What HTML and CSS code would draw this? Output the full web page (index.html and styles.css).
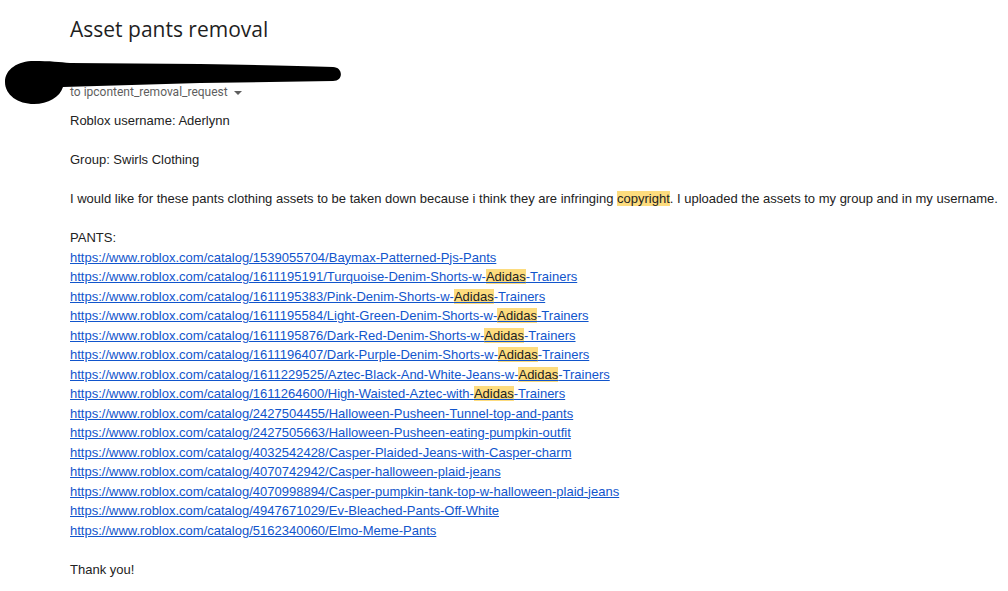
FILE: index.html
```html
<!DOCTYPE html>
<html>
<head>
<meta charset="utf-8">
<link rel="stylesheet" href="styles.css">
</head>
<body>
<div class="page">
  <svg class="scribble" width="360" height="120" viewBox="0 0 360 120">
    <path d="M34 61 C 50 61 60 62 70 63 L 200 64 C 260 65 300 66 333 67 C 343 67 344 81 333 81 L 200 83 L 63 87 C 60 97 48 104 34 104 C 18 104 5 95 5 82 C 5 69 18 61 34 61 Z" fill="#000"/>
  </svg>
  <h1 class="subject">Asset pants removal</h1>
  <div class="header">
    <div class="to">to ipcontent_removal_request <span class="caret"></span></div>
  </div>
  <div class="body">
    <p>Roblox username: Aderlynn</p>
    <p>Group: Swirls Clothing</p>
    <p>I would like for these pants clothing assets to be taken down because i think they are infringing <mark>copyright</mark>. I uploaded the assets to my group and in my username.</p>
    <p>PANTS:<br>
<a href="#">https://www.roblox.com/catalog/1539055704/Baymax-Patterned-Pjs-Pants</a><br>
<a href="#">https://www.roblox.com/catalog/1611195191/Turquoise-Denim-Shorts-w-<mark>Adidas</mark>-Trainers</a><br>
<a href="#">https://www.roblox.com/catalog/1611195383/Pink-Denim-Shorts-w-<mark>Adidas</mark>-Trainers</a><br>
<a href="#">https://www.roblox.com/catalog/1611195584/Light-Green-Denim-Shorts-w-<mark>Adidas</mark>-Trainers</a><br>
<a href="#">https://www.roblox.com/catalog/1611195876/Dark-Red-Denim-Shorts-w-<mark>Adidas</mark>-Trainers</a><br>
<a href="#">https://www.roblox.com/catalog/1611196407/Dark-Purple-Denim-Shorts-w-<mark>Adidas</mark>-Trainers</a><br>
<a href="#">https://www.roblox.com/catalog/1611229525/Aztec-Black-And-White-Jeans-w-<mark>Adidas</mark>-Trainers</a><br>
<a href="#">https://www.roblox.com/catalog/1611264600/High-Waisted-Aztec-with-<mark>Adidas</mark>-Trainers</a><br>
<a href="#">https://www.roblox.com/catalog/2427504455/Halloween-Pusheen-Tunnel-top-and-pants</a><br>
<a href="#">https://www.roblox.com/catalog/2427505663/Halloween-Pusheen-eating-pumpkin-outfit</a><br>
<a href="#">https://www.roblox.com/catalog/4032542428/Casper-Plaided-Jeans-with-Casper-charm</a><br>
<a href="#">https://www.roblox.com/catalog/4070742942/Casper-halloween-plaid-jeans</a><br>
<a href="#">https://www.roblox.com/catalog/4070998894/Casper-pumpkin-tank-top-w-halloween-plaid-jeans</a><br>
<a href="#">https://www.roblox.com/catalog/4947671029/Ev-Bleached-Pants-Off-White</a><br>
<a href="#">https://www.roblox.com/catalog/5162340060/Elmo-Meme-Pants</a></p>
    <p>Thank you!</p>
  </div>
</div>
</body>
</html>
```
FILE: styles.css
```css
html, body {
  margin: 0;
  padding: 0;
  background: #fff;
}
.page {
  padding: 15px 0 0 70px;
  position: relative;
}
.scribble {
  position: absolute;
  left: 0;
  top: 0;
}
.subject {
  margin: 0;
  font-family: "Open Sans", "Roboto", sans-serif;
  font-weight: 400;
  font-size: 21px;
  line-height: 28px;
  color: #1f1f1f;
}
.header {
  height: 68px;
  display: flex;
  flex-direction: column;
  justify-content: flex-end;
}
.to {
  margin-bottom: 11px;
  font-family: "Roboto", "Liberation Sans", sans-serif;
  font-size: 12px;
  line-height: 16px;
  color: #5e5e5e;
  white-space: nowrap;
  position: relative;
}
.caret {
  display: inline-block;
  width: 0;
  height: 0;
  border-left: 4px solid transparent;
  border-right: 4px solid transparent;
  border-top: 4px solid #5e5e5e;
  vertical-align: middle;
  margin-left: 3px;
}
.body {
  font-family: "Liberation Sans", Arial, sans-serif;
  font-size: 13px;
  line-height: 19.5px;
  color: #222;
  white-space: nowrap;
}
.body p {
  margin: 0 0 19.5px 0;
}
.body a {
  color: #1155cc;
  text-decoration: underline;
}
mark {
  background: #fddc7e;
  color: inherit;
}
a mark {
  color: #222;
}
```
